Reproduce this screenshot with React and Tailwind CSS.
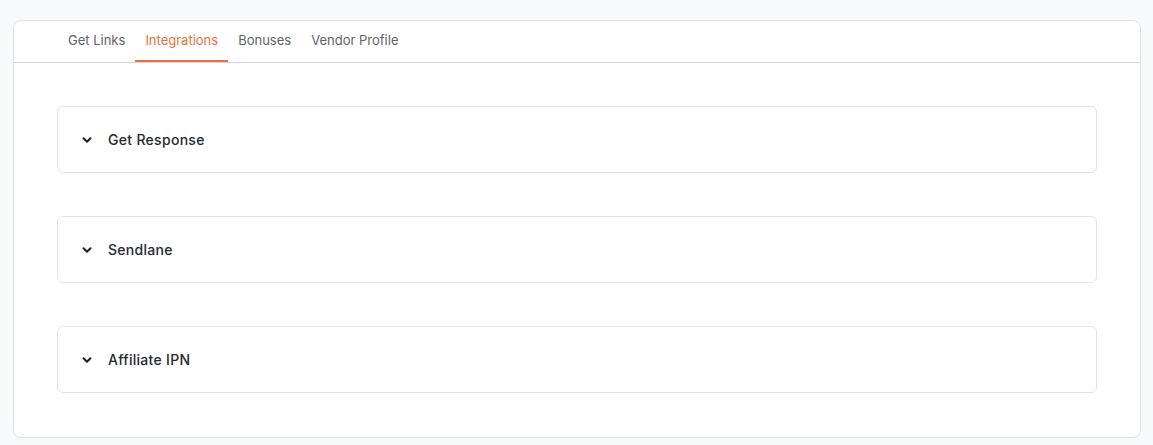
import { ChevronDown } from 'lucide-react';

const tabs = ['Get Links', 'Integrations', 'Bonuses', 'Vendor Profile'];
const items = ['Get Response', 'Sendlane', 'Affiliate IPN'];

export default function App() {
  return (
    <div className="min-h-screen bg-[#f8f9fb] pt-5 pl-[13px] pr-[12px] pb-2" style={{ fontFamily: 'Inter, sans-serif' }}>
      <div className="bg-white border border-[#dfe1e5] rounded-lg">
        {/* tabs */}
        <div className="flex pl-[44px] border-b border-[#d4d6da] h-[42px]">
          {tabs.map((t, i) => (
            <button
              key={t}
              className={
                'px-[10px] text-[13px] h-full -mb-px border-b-2 ' +
                (i === 1 ? 'text-[#e8713c] border-[#e8713c]' : 'text-[#5f6369] border-transparent')
              }
            >
              {t}
            </button>
          ))}
        </div>

        {/* accordions */}
        <div className="flex flex-col gap-[43px] pt-[43px] pb-[44px] pl-[43px] pr-[43px]">
          {items.map(name => (
            <div key={name} className="h-[67px] border border-[#e1e3e7] rounded-md flex items-center pl-[22px]">
              <ChevronDown size={14} strokeWidth={3.5} className="text-[#1f2328]" />
              <span className="ml-[14px] text-[14px] tracking-[0.3px] font-medium text-[#24292f]">{name}</span>
            </div>
          ))}
        </div>
      </div>
    </div>
  );
}
